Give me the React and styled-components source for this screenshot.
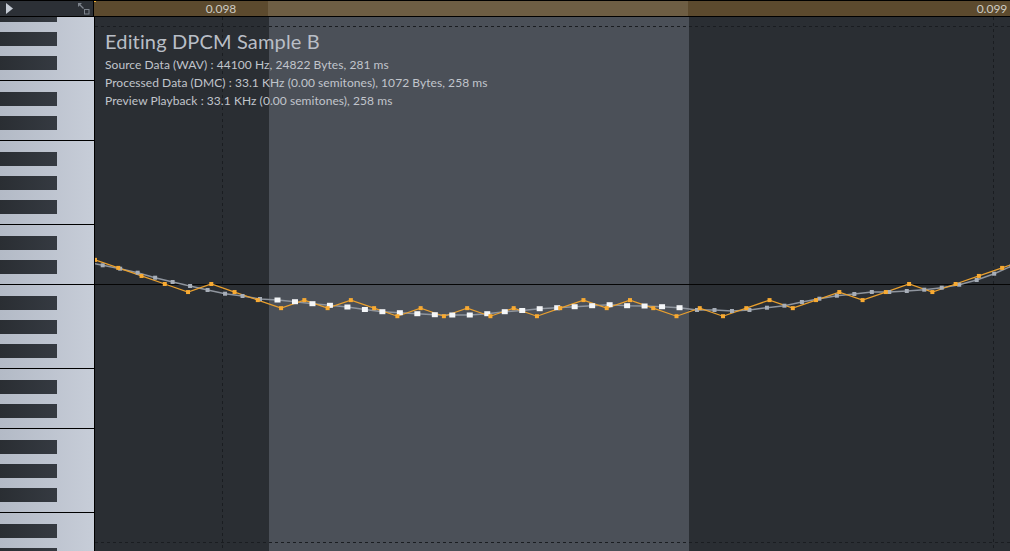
import React from "react";
import styled, { createGlobalStyle } from "styled-components";

const GlobalStyle = createGlobalStyle`
  html, body {
    margin: 0;
    padding: 0;
    background: #2a2e33;
    overflow: hidden;
  }
  #root {
    width: 1010px;
    height: 551px;
  }
`;

// timeline geometry (canvas coords, canvas starts at page x 95 / y 17)
const CANVAS_W = 915;
const CANVAS_H = 534;
const CENTER_Y = 267;
const SEL_START = 174;
const SEL_END = 594;

// source wav samples, first one is off screen on the left
const SOURCE = [
  262, 265.3, 268.7, 272.7, 277.7, 282, 286, 290, 293.7, 296, 299, 300, 301.7,
  303.7, 305.3, 307, 309.5, 311.7, 312.7, 313.7, 314.7, 315, 315, 313.7, 311.7,
  310.5, 308.7, 307.7, 306.7, 305.7, 304.7, 305.7, 306, 306.7, 307.7, 310, 310,
  311, 310, 307.7, 305.7, 302, 298.7, 295.7, 294, 292, 292, 291, 289.7, 287.7,
  284.7, 280, 273.7, 266,
];

// dmc delta levels
const DMC = [
  -3, -2, -1, 0, 1, 0, 1, 2, 3, 2, 3, 2, 3, 4, 3, 4, 3, 4, 3, 4, 3, 2, 3, 2, 3,
  4, 3, 4, 3, 2, 3, 2, 1, 2, 1, 0, 1, 0, -1, -2, -3,
];

const srcPoints = SOURCE.map((y, i) => ({
  x: 7.7 + 17.48 * (i - 1),
  y: y - 17,
}));

const dmcPoints = DMC.map((k, j) => ({
  x: 23.26 * j,
  y: CENTER_Y + 8.05 * k,
}));

const toPath = (pts) =>
  pts.map((p, i) => `${i ? "L" : "M"}${p.x.toFixed(1)} ${p.y.toFixed(1)}`).join(" ");

const Editor = styled.div`
  display: flex;
  flex-direction: column;
  width: 1010px;
  height: 551px;
  border-top: 1px solid #000;
  box-sizing: border-box;
  font-family: Lato, "Noto Sans", sans-serif;
  overflow: hidden;
`;

const TopBar = styled.div`
  display: flex;
  height: 15px;
  border-bottom: 1px solid #000;
  flex-shrink: 0;
`;

const Corner = styled.div`
  display: flex;
  align-items: center;
  justify-content: space-between;
  width: 94px;
  padding: 0 3px 0 6px;
  box-sizing: border-box;
  background: #2c3036;
  border-right: 1px solid #000;
`;

const Ruler = styled.div`
  position: relative;
  flex: 1;
  background: #5c4a2e;
`;

const RulerSelection = styled.div`
  position: absolute;
  top: 0;
  bottom: 0;
  left: ${(p) => p.$left}px;
  width: ${(p) => p.$width}px;
  background: #6e5e44;
`;

const RulerLabel = styled.span`
  position: absolute;
  top: 0;
  left: ${(p) => p.$x}px;
  transform: translateX(-50%);
  font-size: 12px;
  line-height: 15px;
  color: #cdcac3;
`;

const Playhead = styled.div`
  position: absolute;
  top: -1px;
  left: 0;
  width: 2px;
  height: 2px;
  background: #f0b030;
`;

const Body = styled.div`
  display: flex;
  flex: 1;
  min-height: 0;
`;

const Piano = styled.div`
  width: 94px;
  border-right: 1px solid #000;
  overflow: hidden;
  flex-shrink: 0;
  background: linear-gradient(90deg, #b3bac6, #c7cdd8);
`;

const Keys = styled.div`
  display: flex;
  flex-direction: column;
  margin-top: -21px;
`;

const KeyGroup = styled.div`
  display: flex;
  flex-direction: column;
  gap: 10px;
  height: ${(p) => (p.$blacks === 3 ? 84 : 60)}px;
  padding-top: 11px;
  border-top: 1px solid #000;
  box-sizing: border-box;
  flex-shrink: 0;
`;

const BlackKey = styled.div`
  width: 57px;
  height: 14px;
  background: linear-gradient(90deg, #2a2e33, #353a41);
`;

const Canvas = styled.div`
  position: relative;
  flex: 1;
  background: #2a2e33;
  overflow: hidden;
`;

const Wave = styled.svg`
  display: block;
`;

const Info = styled.div`
  position: absolute;
  top: 12px;
  left: 10px;
  display: flex;
  flex-direction: column;
  color: #c1c5cc;
  font-size: 12px;
  line-height: 18px;
  letter-spacing: 0.06px;
`;

const Title = styled.div`
  font-size: 20px;
  line-height: 24px;
  color: #b9bec6;
  letter-spacing: 0.15px;
  margin-bottom: 3px;
`;

const PlayIcon = () => (
  <svg width="7" height="11" viewBox="0 0 7 11">
    <path d="M0 0 L7 5.5 L0 11 Z" fill="#c5cbd4" />
  </svg>
);

const ExpandIcon = () => (
  <svg width="12" height="12" viewBox="0 0 12 12">
    <path d="M0.5 0.5 L5.5 5.5" stroke="#7d838c" strokeWidth="1.3" />
    <path d="M0 0 L4 0 L0 4 Z" fill="#7d838c" />
    <rect x="6.5" y="6.5" width="4.5" height="4.5" fill="none" stroke="#7d838c" strokeWidth="1" />
  </svg>
);

const GROUPS = [3, 2, 3, 2, 3, 2, 3, 2];

function WaveView() {
  const inSel = (x) => x >= SEL_START && x <= SEL_END;
  return (
    <Wave width={CANVAS_W} height={CANVAS_H} viewBox={`0 0 ${CANVAS_W} ${CANVAS_H}`}>
      <rect x={SEL_START} y="0" width={SEL_END - SEL_START} height={CANVAS_H} fill="#4b5058" />
      <g stroke="#1a1d21" strokeWidth="1" strokeDasharray="3 3">
        <line x1="0" y1="9.5" x2={CANVAS_W} y2="9.5" />
        <line x1="0" y1="525.5" x2={CANVAS_W} y2="525.5" />
        <line x1="127.5" y1="0" x2="127.5" y2={CANVAS_H} />
        <line x1="898.5" y1="0" x2="898.5" y2={CANVAS_H} />
      </g>
      <line x1="0" y1={CENTER_Y + 0.5} x2={CANVAS_W} y2={CENTER_Y + 0.5} stroke="#050505" />
      <path d={toPath(srcPoints)} fill="none" stroke="#8f959e" strokeWidth="1.5" />
      <path d={toPath(dmcPoints)} fill="none" stroke="#eaa02e" strokeWidth="1.2" />
      {srcPoints.map((p, i) =>
        inSel(p.x) ? (
          <rect key={`s${i}`} x={p.x - 3} y={p.y - 2.5} width="6" height="5" fill="#f4f6f8" />
        ) : (
          <rect key={`s${i}`} x={p.x - 2} y={p.y - 2} width="4" height="4" fill="#a7aeb8" />
        )
      )}
      {dmcPoints.map((p, j) => (
        <rect key={`d${j}`} x={p.x - 2} y={p.y - 2} width="4" height="4" fill="#f8aa32" />
      ))}
    </Wave>
  );
}

export default function App() {
  return (
    <>
      <GlobalStyle />
      <Editor>
        <TopBar>
          <Corner>
            <PlayIcon />
            <ExpandIcon />
          </Corner>
          <Ruler>
            <RulerSelection $left={SEL_START} $width={SEL_END - SEL_START} />
            <Playhead />
            <RulerLabel $x={127}>0.098</RulerLabel>
            <RulerLabel $x={898}>0.099</RulerLabel>
          </Ruler>
        </TopBar>
        <Body>
          <Piano>
            <Keys>
              {GROUPS.map((n, i) => (
                <KeyGroup key={i} $blacks={n}>
                  {Array.from({ length: n }).map((_, k) => (
                    <BlackKey key={k} />
                  ))}
                </KeyGroup>
              ))}
            </Keys>
          </Piano>
          <Canvas>
            <WaveView />
            <Info>
              <Title>Editing DPCM Sample B</Title>
              <span>Source Data (WAV) : 44100 Hz, 24822 Bytes, 281 ms</span>
              <span>Processed Data (DMC) : 33.1 KHz (0.00 semitones), 1072 Bytes, 258 ms</span>
              <span>Preview Playback : 33.1 KHz (0.00 semitones), 258 ms</span>
            </Info>
          </Canvas>
        </Body>
      </Editor>
    </>
  );
}
